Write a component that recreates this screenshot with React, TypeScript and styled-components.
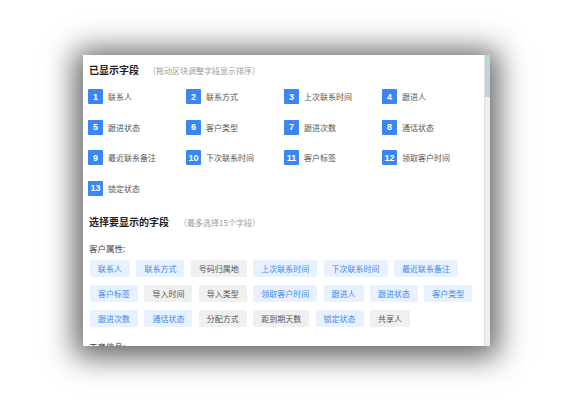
import React from "react";
import styled, { createGlobalStyle } from "styled-components";

const GlobalStyle = createGlobalStyle`
  html, body {
    margin: 0;
    padding: 0;
    background: #ffffff;
    font-family: "Noto Sans CJK SC", "Noto Sans", sans-serif;
  }
`;

const Page = styled.div`
  width: 574px;
  height: 402px;
  padding: 55px 0 0 83px;
  box-sizing: border-box;
  overflow: hidden;
`;

const Panel = styled.section`
  display: flex;
  width: 407px;
  height: 291px;
  background: #ffffff;
  box-shadow: 0 3px 28px 8px rgba(0, 0, 0, 0.62);
  overflow: hidden;
`;

const Content = styled.div`
  flex: 1;
  overflow: hidden;
  padding: 8px 0 0 5px;
  box-sizing: border-box;
`;

const ScrollTrack = styled.div`
  width: 6px;
  flex: none;
  background: #efefef;
  border-left: 1px solid #e0e0e0;
  box-sizing: border-box;
`;

const ScrollThumb = styled.div`
  height: 42px;
  background: #bad5dc;
`;

const Header = styled.div<{ $top?: number }>`
  display: flex;
  align-items: baseline;
  height: 14px;
  line-height: 14px;
  margin-top: ${(p) => p.$top ?? 0}px;
  padding-left: 1px;
`;

const Title = styled.h3`
  margin: 0;
  font-size: 10px;
  font-weight: 700;
  color: #1e1e1e;
`;

const Hint = styled.span<{ $gap: number }>`
  margin-left: ${(p) => p.$gap}px;
  font-size: 8px;
  color: #9c9c9c;
`;

const FieldGrid = styled.div`
  display: grid;
  grid-template-columns: repeat(4, 98px);
  row-gap: 15.5px;
  margin-top: 12px;
`;

const Field = styled.div`
  display: flex;
  align-items: center;
  gap: 5px;
  height: 15px;
`;

const Badge = styled.span`
  display: flex;
  align-items: center;
  justify-content: center;
  width: 15px;
  height: 15px;
  border-radius: 1px;
  background: #3a86f4;
  color: #ffffff;
  font-family: "Liberation Sans", Arial, sans-serif;
  font-size: 9px;
  font-weight: 700;
`;

const FieldLabel = styled.span`
  font-size: 8px;
  color: #555555;
  white-space: nowrap;
`;

const GroupLabel = styled.div<{ $top: number }>`
  margin-top: ${(p) => p.$top}px;
  padding-left: 1px;
  height: 12px;
  line-height: 12px;
  font-size: 8.5px;
  color: #444444;
`;

const TagList = styled.div`
  display: flex;
  flex-wrap: wrap;
  column-gap: 6.4px;
  row-gap: 7.7px;
  margin-top: 6px;
  padding-left: 2px;
  width: 390px;
`;

const Tag = styled.span<{ $active: boolean }>`
  display: inline-flex;
  align-items: center;
  height: 17px;
  padding: 0 8px;
  border-radius: 2px;
  font-size: 8px;
  white-space: nowrap;
  background: ${(p) => (p.$active ? "#e7f1ff" : "#f0f0f0")};
  color: ${(p) => (p.$active ? "#4189f2" : "#555555")};
`;

const shown = [
  "联系人",
  "联系方式",
  "上次联系时间",
  "跟进人",
  "跟进状态",
  "客户类型",
  "跟进次数",
  "通话状态",
  "最近联系备注",
  "下次联系时间",
  "客户标签",
  "领取客户时间",
  "锁定状态",
];

const customerTags: [string, boolean][] = [
  ["联系人", true],
  ["联系方式", true],
  ["号码归属地", false],
  ["上次联系时间", true],
  ["下次联系时间", true],
  ["最近联系备注", true],
  ["客户标签", true],
  ["导入时间", false],
  ["导入类型", false],
  ["领取客户时间", true],
  ["跟进人", true],
  ["跟进状态", true],
  ["客户类型", true],
  ["跟进次数", true],
  ["通话状态", true],
  ["分配方式", false],
  ["距到期天数", false],
  ["锁定状态", true],
  ["共享人", false],
];

export default function App() {
  return (
    <>
      <GlobalStyle />
      <Page>
        <Panel>
          <Content>
            <Header>
              <Title>已显示字段</Title>
              <Hint $gap={9}>（拖动区块调整字段显示排序）</Hint>
            </Header>
            <FieldGrid>
              {shown.map((name, i) => (
                <Field key={name}>
                  <Badge>{i + 1}</Badge>
                  <FieldLabel>{name}</FieldLabel>
                </Field>
              ))}
            </FieldGrid>

            <Header $top={19.7}>
              <Title>选择要显示的字段</Title>
              <Hint $gap={10}>（最多选择15个字段）</Hint>
            </Header>

            <GroupLabel $top={13.3}>客户属性:</GroupLabel>
            <TagList>
              {customerTags.map(([name, active]) => (
                <Tag key={name} $active={active}>
                  {name}
                </Tag>
              ))}
            </TagList>

            <GroupLabel $top={13}>工商信息:</GroupLabel>
          </Content>
          <ScrollTrack>
            <ScrollThumb />
          </ScrollTrack>
        </Panel>
      </Page>
    </>
  );
}
